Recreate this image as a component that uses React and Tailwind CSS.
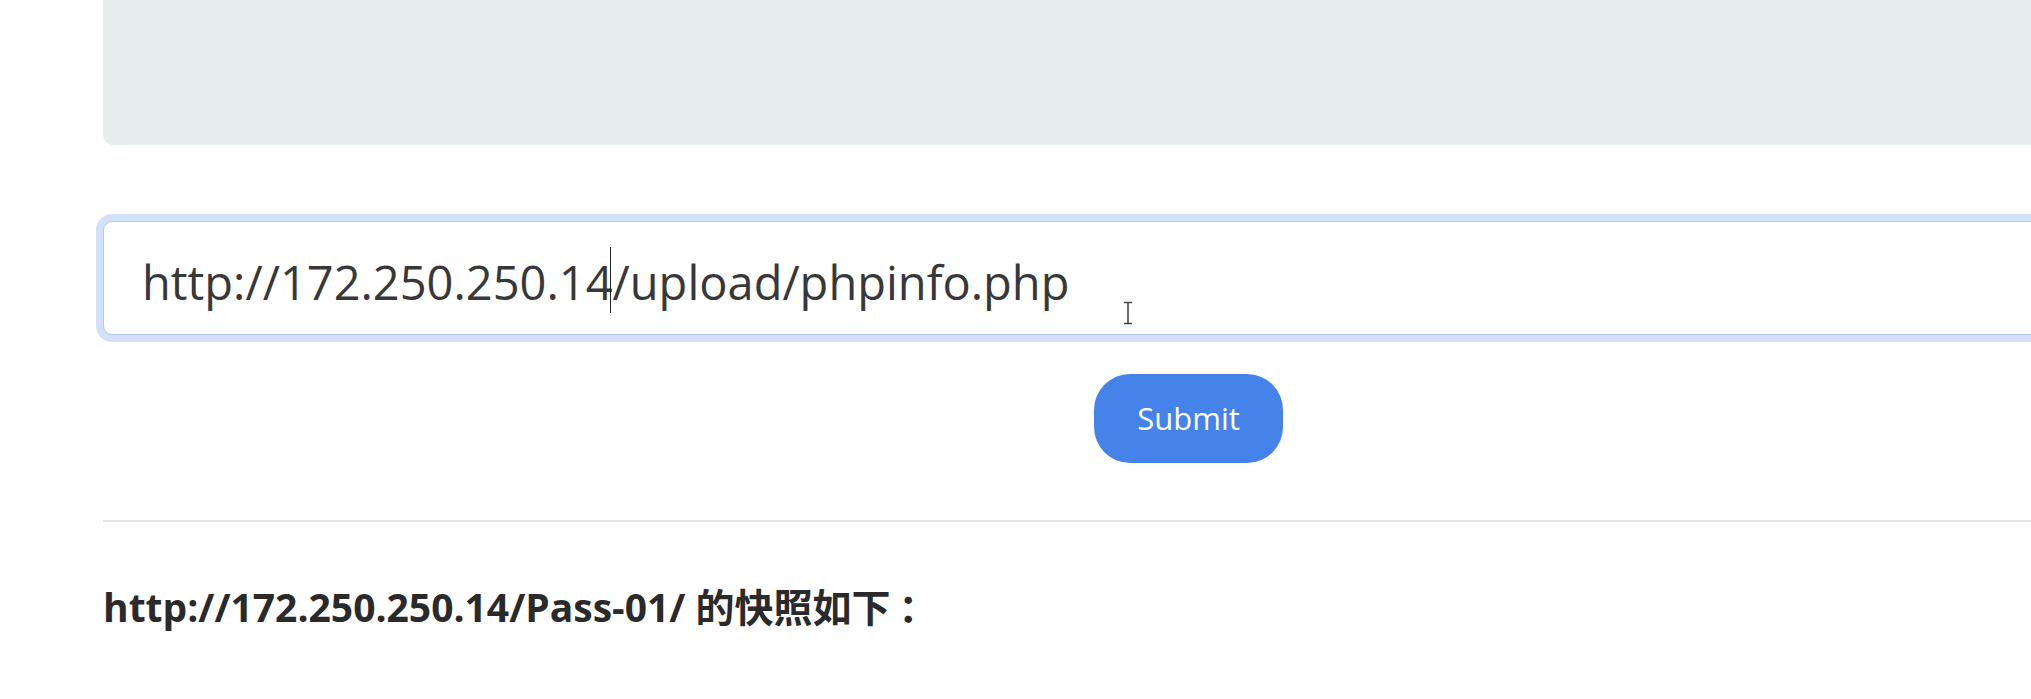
import React from 'react';

const App = () => {
  return (
    <div className="relative h-[699px] w-full overflow-hidden bg-white" style={{ fontFamily: '"Open Sans", "Noto Sans CJK SC", sans-serif' }}>
      <div className="ml-[103px] w-[2171px]">
        {/* top panel */}
        <div className="h-[145px] rounded-b-[10px] bg-[#e6eded]" />

        {/* url form */}
        <div className="mt-[76px]">
          <div className="relative h-[114px] rounded-[9px] border border-[#b4c9ea] bg-white pl-[38px] pt-[28px] shadow-[0_0_0_7px_#d2e1f8]">
            <div className="text-[47px] leading-[64px] text-[#383838] whitespace-nowrap">
              http://172.250.250.14
              <span className="relative">
                <span className="absolute left-[-3px] top-[-3px] h-[66px] w-[1.5px] bg-[#222]" />
              </span>
              /upload/phpinfo.php
            </div>
            {/* mouse cursor */}
            <svg className="absolute left-[1018px] top-[79px]" width="12" height="24" viewBox="0 0 12 24">
              <path d="M2 1.5h8M6 1.5v21M2 22.5h8" stroke="#444" strokeWidth="1.6" fill="none" />
            </svg>
          </div>
          <div className="mt-[39px] flex justify-center">
            <button className="flex h-[89px] w-[189px] items-center justify-center rounded-[36px] bg-[#4582ea] text-[31px] text-white">
              Submit
            </button>
          </div>
        </div>

        <div className="mt-[57px] h-[2px] bg-[#e6e6e6]" />

        <div className="mt-[61px] text-[39px] font-bold leading-[47px] text-[#2a2a2a] whitespace-nowrap">
          http://172.250.250.14/Pass-01/ 的快照如下<span className="ml-[8px]">：</span>
        </div>
      </div>
    </div>
  );
};

export default App;
